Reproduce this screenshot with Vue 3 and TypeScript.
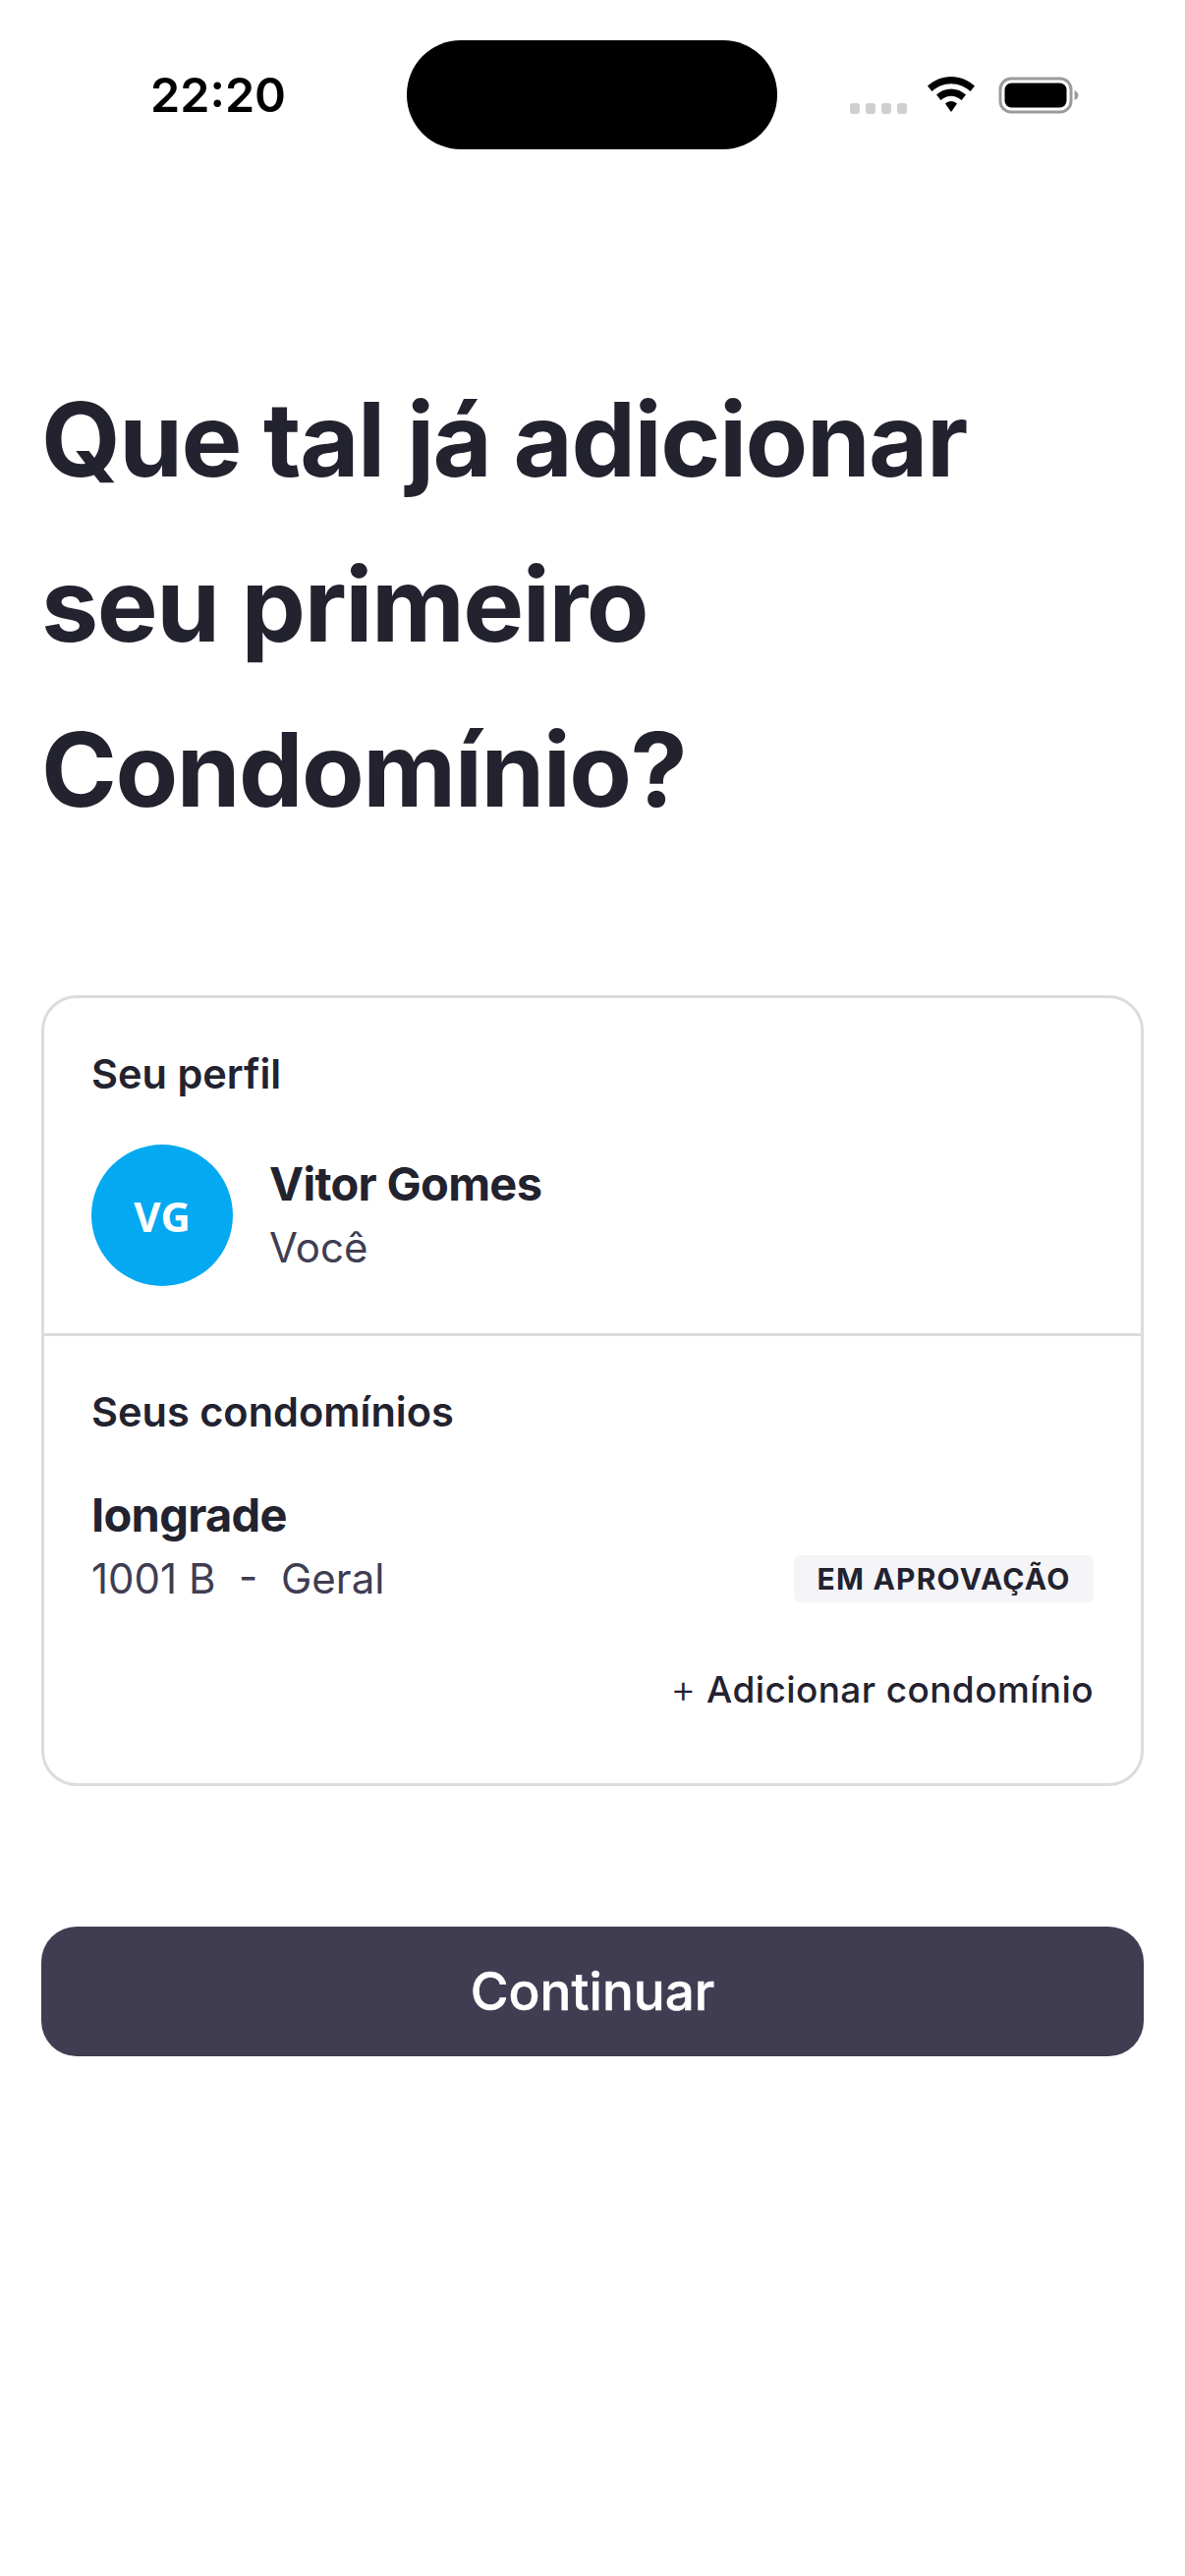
<script setup lang="ts">
const headingLines: string[] = ['Que tal já adicionar', 'seu primeiro', 'Condomínio?']
</script>

<template>
  <main class="screen">
    <header class="status">
      <span class="time">22:20</span>
      <div class="island"></div>
      <div class="indicators">
        <div class="dots"><i></i><i></i><i></i><i></i></div>
        <svg class="wifi" width="50" height="38" viewBox="0 0 50 38">
          <path d="M25 0C15.800 0 7.500 3.600 1 9.500L5.500 15C10.800 10.200 17.500 7.300 25 7.300S39.200 10.200 44.500 15L49 9.500C42.500 3.600 34.200 0 25 0Z" fill="#000"/>
          <path d="M25 12.500C19.300 12.500 14.100 14.700 10 18.500L14.500 24C17.400 21.300 21 19.700 25 19.700S32.600 21.300 35.500 24L40 18.500C35.900 14.700 30.700 12.500 25 12.500Z" fill="#000"/>
          <path d="M25 25C22.700 25 20.700 25.900 19 27.500L25 36L31 27.500C29.300 25.900 27.300 25 25 25Z" fill="#000"/>
        </svg>
        <svg class="battery" width="82" height="38" viewBox="0 0 82 38">
          <rect x="2" y="2" width="72" height="34" rx="11" fill="none" stroke="#9b9b9b" stroke-width="3"/>
          <rect x="6.500" y="6.500" width="63" height="25" rx="7" fill="#000"/>
          <path d="M77.500 14C80 15 81.500 17 81.500 19S80 23 77.500 24Z" fill="#9b9b9b"/>
        </svg>
      </div>
    </header>

    <h1 class="title">
      <span v-for="line in headingLines" :key="line">{{ line }}</span>
    </h1>

    <section class="card">
      <div class="profile">
        <h2 class="label">Seu perfil</h2>
        <div class="person">
          <div class="avatar">VG</div>
          <div class="person-text">
            <strong class="name">Vitor Gomes</strong>
            <span class="sub">Você</span>
          </div>
        </div>
      </div>
      <div class="condos">
        <h2 class="label">Seus condomínios</h2>
        <div class="condo">
          <strong class="name">Iongrade</strong>
          <div class="condo-row">
            <span class="sub">1001 B&nbsp; -&nbsp; Geral</span>
            <span class="badge">EM APROVAÇÃO</span>
          </div>
        </div>
        <div class="add"><span class="plus">+</span> Adicionar condomínio</div>
      </div>
    </section>

    <button class="cta" type="button">Continuar</button>
  </main>
</template>

<style>
html, body { margin: 0; background: #fff; }
</style>

<style scoped>
.screen {
  width: 1206px;
  height: 2622px;
  box-sizing: border-box;
  padding: 0 42px;
  background: #fff;
  font-family: Inter, "Noto Sans", sans-serif;
  color: #23222f;
  overflow: hidden;
}
.status {
  position: relative;
  height: 153px;
  margin: 0 -42px;
}
.time {
  position: absolute;
  left: 153px;
  top: 69px;
  font-family: Inter, sans-serif;
  font-size: 48.500px;
  line-height: 56px;
  font-weight: 600;
  color: #000;
}
.island {
  position: absolute;
  left: 414px;
  top: 41px;
  width: 377px;
  height: 111px;
  border-radius: 55px;
  background: #000;
}
.indicators {
  position: absolute;
  left: 865px;
  top: 78px;
  display: flex;
  align-items: flex-end;
}
.dots { display: flex; gap: 6px; margin-bottom: 0; }
.dots i {
  display: block;
  width: 10px;
  height: 11px;
  border-radius: 3px;
  background: #cfcfcf;
}
.wifi { margin-left: 20px; }
.battery { margin-left: 23px; }
.title {
  margin: 210px 0 0;
  display: flex;
  flex-direction: column;
  font-size: 104px;
  line-height: 168px;
  font-weight: 700;
  letter-spacing: -1.500px;
  color: #23222f;
}
.card {
  margin-top: 146px;
  width: 1122px;
  box-sizing: border-box;
  border: 3px solid #dcdcdc;
  border-radius: 36px;
}
.profile {
  padding: 53px 48px 48px;
  border-bottom: 3px solid #dcdcdc;
}
.label {
  margin: 0;
  font-size: 41.500px;
  line-height: 48px;
  font-weight: 600;
}
.person {
  margin-top: 48px;
  display: flex;
  align-items: center;
  gap: 37px;
}
.avatar {
  width: 144px;
  height: 144px;
  border-radius: 50%;
  background: #05a9f1;
  color: #fff;
  display: flex;
  align-items: center;
  justify-content: center;
  font-family: "Open Sans", sans-serif;
  font-weight: 700;
  font-size: 42px;
}
.person-text, .condo { display: flex; flex-direction: column; }
.name {
  font-size: 47px;
  line-height: 66px;
  font-weight: 700;
  letter-spacing: -0.700px;
}
.sub {
  font-size: 42px;
  line-height: 64px;
  font-weight: 400;
  color: #403d52;
}
.condos { padding: 53px 48px 71px; }
.condo { margin-top: 48px; }
.condo-row {
  display: flex;
  justify-content: space-between;
  align-items: center;
}
.badge {
  box-sizing: border-box;
  width: 305px;
  height: 48px;
  background: #f5f5f8;
  border-radius: 6px;
  font-size: 30px;
  line-height: 48px;
  font-weight: 700;
  letter-spacing: 1.200px;
  text-align: center;
  white-space: nowrap;
}
.add {
  margin-top: 56px;
  text-align: right;
  font-size: 37px;
  line-height: 48px;
  font-weight: 500;
  letter-spacing: 0.400px;
}
.plus { font-weight: 300; font-size: 40px; }
.cta {
  display: block;
  margin-top: 143px;
  width: 1122px;
  height: 132px;
  border: 0;
  border-radius: 36px;
  background: #403d52;
  color: #fff;
  font-family: Inter, sans-serif;
  font-size: 53px;
  font-weight: 500;
  -webkit-text-stroke: 0.500px #fff;
}
</style>
